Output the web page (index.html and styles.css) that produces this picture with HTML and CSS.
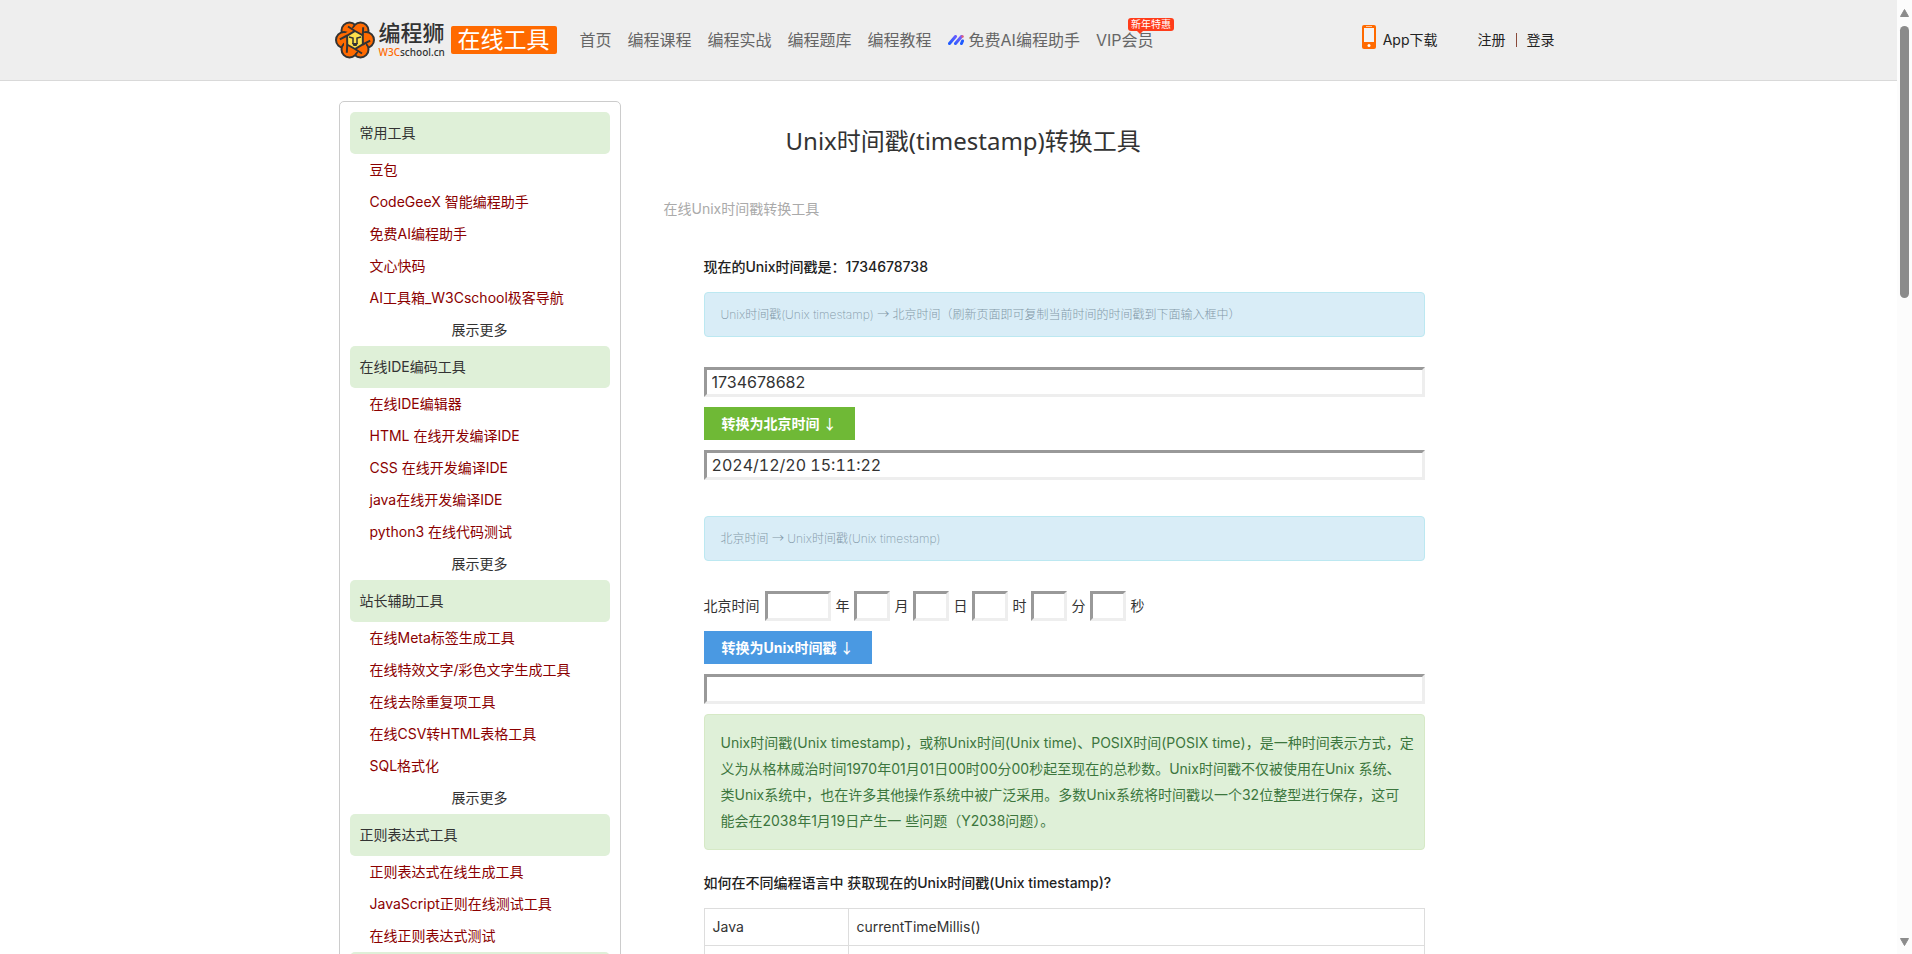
FILE: index.html
```html
<!DOCTYPE html>
<html lang="zh-CN">
<head>
<meta charset="utf-8">
<title>Unix时间戳(timestamp)转换工具</title>
<link rel="stylesheet" href="styles.css">
</head>
<body>
<header class="topbar">
  <div class="wrap topbar-inner">
    <a class="brand" href="#">
      <svg class="brand-mark" viewBox="0 0 40 38" aria-hidden="true">
        <defs><path id="arm" d="M28 14.500L20 10L13 5.500"/></defs>
        <g fill="#ff6a00" stroke="#333" stroke-width="2">
          <circle cx="14.500" cy="9.500" r="8"/><circle cx="25.500" cy="9.500" r="8"/>
          <circle cx="31" cy="19" r="8"/><circle cx="9" cy="19" r="8"/>
          <circle cx="25.500" cy="28.500" r="8"/><circle cx="14.500" cy="28.500" r="8"/>
        </g>
        <path d="M20 6l11 7v12l-11 7-11-7V13z" fill="#ff6a00"/>
        <path d="M20 10l8 4.500v9L20 28l-8-4.500v-9z" fill="#ffe14d"/>
        <g fill="none" stroke="#333" stroke-width="2">
          <use href="#arm"/>
          <use href="#arm" transform="rotate(60 20 19)"/>
          <use href="#arm" transform="rotate(120 20 19)"/>
          <use href="#arm" transform="rotate(180 20 19)"/>
          <use href="#arm" transform="rotate(240 20 19)"/>
          <use href="#arm" transform="rotate(300 20 19)"/>
        </g>
        <path d="M14 16l4 1v6M26 16l-4 1v6" fill="none" stroke="#333" stroke-width="1.500"/>
        <path d="M17 22h6l-1.500 3h-3z" fill="#333"/>
      </svg>
      <span class="brand-name">
        <span class="brand-cn">编程狮</span>
        <span class="brand-en"><b>W3C</b>school.cn</span>
      </span>
      <span class="brand-tag">在线工具</span>
    </a>
    <nav class="nav">
      <a href="#">首页</a>
      <a href="#">编程课程</a>
      <a href="#">编程实战</a>
      <a href="#">编程题库</a>
      <a href="#">编程教程</a>
      <a class="nav-ai" href="#">
        <svg class="ai-icon" viewBox="0 0 16 10" aria-hidden="true">
          <defs><linearGradient id="ai" x1="0" y1="1" x2="1" y2="0"><stop offset="0" stop-color="#1f5cff"/><stop offset="1" stop-color="#7a5cff"/></linearGradient></defs>
          <path d="M1.500 8.500L7.500 1.500M7.500 8.500L13.500 1.500" stroke="url(#ai)" stroke-width="3" stroke-linecap="round"/>
          <path d="M13.500 8.500L14.500 6" stroke="#1f5cff" stroke-width="3" stroke-linecap="round"/><circle cx="14.500" cy="1.500" r="1.300" fill="#e0607a"/>
        </svg>免费AI编程助手</a>
      <a class="nav-vip" href="#">VIP会员<span class="promo">新年特惠</span></a>
    </nav>
    <div class="account">
      <a class="app" href="#">
        <svg class="phone" viewBox="0 0 14 24" aria-hidden="true"><rect width="14" height="24" rx="2" fill="#ff6a00"/><rect x="2" y="3" width="10" height="14" fill="#f3f3f3"/><rect x="4" y="1" width="6" height="1" fill="#ffc49a"/><circle cx="7" cy="20.500" r="1.500" fill="#fff"/></svg>App下载</a>
      <a href="#">注册</a><span class="sep"></span><a href="#">登录</a>
    </div>
  </div>
</header>

<div class="wrap page">
  <aside class="side">
    <h2>常用工具</h2>
    <ul>
      <li><a href="#">豆包</a></li>
      <li><a href="#">CodeGeeX 智能编程助手</a></li>
      <li><a href="#">免费AI编程助手</a></li>
      <li><a href="#">文心快码</a></li>
      <li><a href="#">AI工具箱_W3Cschool极客导航</a></li>
    </ul>
    <button class="more" type="button">展示更多</button>
    <h2>在线IDE编码工具</h2>
    <ul>
      <li><a href="#">在线IDE编辑器</a></li>
      <li><a href="#">HTML 在线开发编译IDE</a></li>
      <li><a href="#">CSS 在线开发编译IDE</a></li>
      <li><a href="#">java在线开发编译IDE</a></li>
      <li><a href="#">python3 在线代码测试</a></li>
    </ul>
    <button class="more" type="button">展示更多</button>
    <h2>站长辅助工具</h2>
    <ul>
      <li><a href="#">在线Meta标签生成工具</a></li>
      <li><a href="#">在线特效文字/彩色文字生成工具</a></li>
      <li><a href="#">在线去除重复项工具</a></li>
      <li><a href="#">在线CSV转HTML表格工具</a></li>
      <li><a href="#">SQL格式化</a></li>
    </ul>
    <button class="more" type="button">展示更多</button>
    <h2>正则表达式工具</h2>
    <ul>
      <li><a href="#">正则表达式在线生成工具</a></li>
      <li><a href="#">JavaScript正则在线测试工具</a></li>
      <li><a href="#">在线正则表达式测试</a></li>
    </ul>
    <h2></h2>
  </aside>

  <main class="main">
    <h1>Unix时间戳(timestamp)转换工具</h1>
    <p class="intro">在线Unix时间戳转换工具</p>
    <div class="tool">
      <p class="strong">现在的Unix时间戳是：1734678738</p>
      <div class="note note-first">Unix时间戳(Unix timestamp) <span class="glyph">→</span> 北京时间（刷新页面即可复制当前时间的时间戳到下面输入框中）</div>
      <input class="field" type="text" value="1734678682" aria-label="Unix时间戳">
      <button class="btn btn-green" type="button">转换为北京时间 <span class="glyph">↓</span></button>
      <input class="field datetime" type="text" value="2024/12/20 15:11:22" aria-label="北京时间">
      <div class="note note-second">北京时间 <span class="glyph">→</span> Unix时间戳(Unix timestamp)</div>
      <div class="date-row">
        <span>北京时间</span>
        <input class="field year" id="y" type="text"><label for="y">年</label>
        <input class="field part" id="mo" type="text"><label for="mo">月</label>
        <input class="field part" id="d" type="text"><label for="d">日</label>
        <input class="field part" id="h" type="text"><label for="h">时</label>
        <input class="field part" id="mi" type="text"><label for="mi">分</label>
        <input class="field part" id="s" type="text"><label for="s">秒</label>
      </div>
      <button class="btn btn-blue" type="button">转换为Unix时间戳 <span class="glyph">↓</span></button>
      <input class="field" type="text" aria-label="转换结果">
      <div class="about">Unix时间戳(Unix timestamp)，或称Unix时间(Unix time)、POSIX时间(POSIX time)，是一种时间表示方式，定<br>义为从格林威治时间1970年01月01日00时00分00秒起至现在的总秒数。Unix时间戳不仅被使用在Unix 系统、<br>类Unix系统中，也在许多其他操作系统中被广泛采用。多数Unix系统将时间戳以一个32位整型进行保存，这可<br>能会在2038年1月19日产生一 些问题（Y2038问题）。</div>
      <p class="strong">如何在不同编程语言中 获取现在的Unix时间戳(Unix timestamp)?</p>
      <table class="langs">
        <tbody>
          <tr><th scope="row">Java</th><td>currentTimeMillis()</td></tr>
          <tr><th scope="row"></th><td></td></tr>
        </tbody>
      </table>
    </div>
  </main>
</div>

<div class="scrollbar" aria-hidden="true">
  <svg class="arrow" viewBox="0 0 9 8"><path d="M4.500 0.500L8.500 7.500H.5z" fill="#8b8b8b" stroke="#8b8b8b" stroke-linejoin="round"/></svg>
  <span class="thumb"></span>
  <svg class="arrow arrow-down" viewBox="0 0 9 8"><path d="M4.500 7.500L8.500.5H.5z" fill="#8b8b8b" stroke="#8b8b8b" stroke-linejoin="round"/></svg>
</div>
</body>
</html>
```
FILE: styles.css
```css
* { box-sizing: border-box; }
html, body { height: 100%; }
body {
  margin: 0;
  padding-right: 15px;
  overflow: hidden;
  background: #fff;
  color: #333;
  font: 14px/20px Inter, "Noto Sans CJK SC", sans-serif;
}
a { color: inherit; text-decoration: none; }
ul, p, h1, h2 { margin: 0; padding: 0; }
ul { list-style: none; }
button { border: 0; background: none; font: inherit; color: inherit; cursor: pointer; }

.wrap { max-width: 1220px; margin: 0 auto; }

.topbar { background: #eee; border-bottom: 1px solid #d9d9d9; }
.topbar-inner { display: flex; align-items: center; height: 80px; }
.brand { display: flex; align-items: center; margin-left: -4px; }
.brand-mark { width: 40px; height: 38px; }
.brand-name { display: flex; flex-direction: column; margin-left: 4px; width: 67px; }
.brand-cn { font-size: 22px; line-height: 24px; font-weight: 500; white-space: nowrap; }
.brand-en { font: 500 10px/14px "Noto Sans", sans-serif; white-space: nowrap; }
.brand-en b { color: #ff6a00; font-weight: 500; }
.brand-tag {
  margin-left: 5px;
  padding: 0 7px;
  border-radius: 2px;
  background: #ff6a00;
  color: #fff;
  font-size: 23px;
  line-height: 28px;
  white-space: nowrap;
}
.nav { display: flex; gap: 16px; margin-left: 23px; color: #666; font-size: 16px; white-space: nowrap; }
.nav-ai { display: flex; align-items: center; gap: 5px; }
.ai-icon { width: 16px; height: 10px; fill: none; }
.nav-vip { position: relative; }
.promo {
  position: absolute;
  left: 32px;
  top: -12px;
  width: 46px;
  border-radius: 3px;
  background: #ff3c1a;
  color: #fff;
  font-size: 10px;
  line-height: 13px;
  text-align: center;
}
.promo::after {
  content: "";
  position: absolute;
  left: 9px;
  top: 13px;
  border: 3px solid transparent;
  border-top-color: #ff3c1a;
}
.account { display: flex; align-items: center; margin-left: auto; padding-right: 4px; color: #222; }
.app { display: flex; align-items: center; gap: 7px; margin-right: 40px; }
.phone { width: 14px; height: 24px; margin-bottom: 6px; }
.sep { width: 1px; height: 14px; margin: 0 10px; background: #8a4a3a; }

.page { display: flex; margin-top: 20px; }
.side {
  flex: 0 0 282px;
  align-self: flex-start;
  padding: 10px;
  border: 1px solid #ccc;
  border-radius: 5px;
}
.side h2 {
  height: 42px;
  padding: 0 10px;
  border-radius: 5px;
  background: #dff0d8;
  font-size: 14px;
  line-height: 42px;
  font-weight: 400;
}
.side ul { padding-left: 20px; color: #8b0000; }
.side li, .more { line-height: 32px; }
.more { display: block; width: 100%; padding: 0; }

.main { flex: 1; margin-left: 43px; padding-right: 134px; }
.main h1 {
  margin-top: 20px;
  padding-left: 122px;
  font: 400 24px/40px "Noto Sans", "Noto Sans CJK SC", sans-serif;
}
.intro { margin-top: 38px; color: #aaa; }
.tool {
  display: flex;
  flex-direction: column;
  align-items: flex-start;
  margin-top: 38px;
  padding-left: 40px;
}
.strong { color: #222; font-weight: 500; }
.glyph { font-family: "Noto Sans CJK SC", sans-serif; line-height: 1; }
.note {
  width: 100%;
  padding: 11px 16px;
  border: 1px solid #bce8f1;
  border-radius: 4px;
  background: #d9edf7;
  color: #8399a8;
  font-size: 12px;
  line-height: 21px;
  font-weight: 200;
}
.note-first { margin: 15px 0 30px; }
.note-second { margin: 36px 0 30px; }
.field {
  width: 100%;
  height: 30px;
  padding: 1px 5px;
  border: 3px solid;
  border-color: #999 #eee #eee #999;
  background: #fff;
  color: #333;
  font: 16px/20px Inter, sans-serif;
}
.datetime { font-variant-numeric: tabular-nums; }
.btn { height: 33px; margin: 10px 0; padding: 0 18px; color: #fff; font-weight: 700; }
.btn .glyph { font-weight: 500; }
.btn-green { background: #6fb936; }
.btn-blue { background: #4a99e2; }
.date-row { display: flex; align-items: center; gap: 4px; }
.date-row label { margin-left: 1px; }
.field.year { width: 66px; margin-left: 1px; }
.field.part { width: 36px; }
.about {
  width: 100%;
  margin: 10px 0 23px;
  padding: 15px 5px 15px 16px;
  border: 1px solid #d6e9c6;
  border-radius: 4px;
  background: #dff0d8;
  color: #3c763d;
  line-height: 26px;
}
.langs { width: 100%; margin-top: 15px; border-collapse: collapse; }
.langs th, .langs td { height: 37px; padding: 8px; border: 1px solid #ddd; text-align: left; font-weight: 400; }
.langs th { width: 20%; }

.scrollbar {
  position: fixed;
  top: 0;
  right: 0;
  bottom: 0;
  display: flex;
  flex-direction: column;
  align-items: center;
  width: 15px;
  padding: 9px 0 8px;
  background: #fcfcfc;
}
.arrow { width: 9px; height: 8px; }
.thumb { width: 9px; height: 272px; margin-top: 9px; border-radius: 5px; background: #8b8b8b; }
.arrow-down { margin-top: auto; }
```
